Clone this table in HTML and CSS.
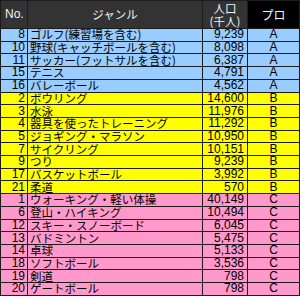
FILE: index.html
```html
<!DOCTYPE html>
<html lang="ja">
<head>
<meta charset="utf-8">
<link rel="stylesheet" href="styles.css">
</head>
<body>
<div class="tbl">
  <div class="row head">
    <div class="no">No.</div>
    <div class="genre">ジャンル</div>
    <div class="pop"><span>人口</span><span>(千人)</span></div>
    <div class="pro">プロ</div>
  </div>
  <div class="row a"><div class="no">8</div><div class="genre">ゴルフ(練習場を含む)</div><div class="pop">9,239</div><div class="pro">A</div></div>
  <div class="row a"><div class="no">10</div><div class="genre">野球(キャッチボールを含む)</div><div class="pop">8,098</div><div class="pro">A</div></div>
  <div class="row a"><div class="no">11</div><div class="genre">サッカー(フットサルを含む)</div><div class="pop">6,387</div><div class="pro">A</div></div>
  <div class="row a"><div class="no">15</div><div class="genre">テニス</div><div class="pop">4,791</div><div class="pro">A</div></div>
  <div class="row a"><div class="no">16</div><div class="genre">バレーボール</div><div class="pop">4,562</div><div class="pro">A</div></div>
  <div class="row b"><div class="no">2</div><div class="genre">ボウリング</div><div class="pop">14,600</div><div class="pro">B</div></div>
  <div class="row b"><div class="no">3</div><div class="genre">水泳</div><div class="pop">11,976</div><div class="pro">B</div></div>
  <div class="row b"><div class="no">4</div><div class="genre">器具を使ったトレーニング</div><div class="pop">11,292</div><div class="pro">B</div></div>
  <div class="row b"><div class="no">5</div><div class="genre">ジョギング・マラソン</div><div class="pop">10,950</div><div class="pro">B</div></div>
  <div class="row b"><div class="no">7</div><div class="genre">サイクリング</div><div class="pop">10,151</div><div class="pro">B</div></div>
  <div class="row b"><div class="no">9</div><div class="genre">つり</div><div class="pop">9,239</div><div class="pro">B</div></div>
  <div class="row b"><div class="no">17</div><div class="genre">バスケットボール</div><div class="pop">3,992</div><div class="pro">B</div></div>
  <div class="row b"><div class="no">21</div><div class="genre">柔道</div><div class="pop">570</div><div class="pro">B</div></div>
  <div class="row c"><div class="no">1</div><div class="genre">ウォーキング・軽い体操</div><div class="pop">40,149</div><div class="pro">C</div></div>
  <div class="row c"><div class="no">6</div><div class="genre">登山・ハイキング</div><div class="pop">10,494</div><div class="pro">C</div></div>
  <div class="row c"><div class="no">12</div><div class="genre">スキー・スノーボード</div><div class="pop">6,045</div><div class="pro">C</div></div>
  <div class="row c"><div class="no">13</div><div class="genre">バドミントン</div><div class="pop">5,475</div><div class="pro">C</div></div>
  <div class="row c"><div class="no">14</div><div class="genre">卓球</div><div class="pop">5,133</div><div class="pro">C</div></div>
  <div class="row c"><div class="no">18</div><div class="genre">ソフトボール</div><div class="pop">3,536</div><div class="pro">C</div></div>
  <div class="row c"><div class="no">19</div><div class="genre">剣道</div><div class="pop">798</div><div class="pro">C</div></div>
  <div class="row c"><div class="no">20</div><div class="genre">ゲートボール</div><div class="pop">798</div><div class="pro">C</div></div>
</div>
</body>
</html>
```
FILE: styles.css
```css
html, body {
  margin: 0;
  padding: 0;
  background: #fff;
}
.tbl {
  width: 300px;
  box-sizing: border-box;
  padding: 1px;
  background: #1c1c1c;
  display: grid;
  grid-template-columns: 26px 174px 44px 51px;
  grid-template-rows: 27px repeat(21, 11.714px);
  gap: 1px;
  font-family: "Noto Sans CJK JP", sans-serif;
  font-size: 11.5px;
  color: #000;
}
.row {
  display: contents;
}
.row > div {
  display: flex;
  align-items: center;
  line-height: 11px;
  white-space: nowrap;
}
.a > div { background: #99ccff; }
.b > div { background: #ffff00; }
.c > div { background: #ff99cc; }
.no {
  justify-content: flex-end;
  padding-right: 2px;
  font-family: "Liberation Sans", sans-serif;
  font-size: 12px;
}
.genre {
  padding-left: 2px;
}
.pop {
  justify-content: flex-end;
  padding-right: 3px;
  font-family: "Liberation Sans", sans-serif;
  font-size: 12px;
}
.pro {
  justify-content: center;
  font-family: "Liberation Sans", sans-serif;
  font-size: 12px;
}
.head > div {
  background: #333333;
  color: #f4f4f4;
}
.head .no {
  justify-content: flex-start;
  padding-left: 4px;
  padding-right: 0;
}
.head .genre {
  justify-content: center;
  padding-left: 0;
}
.head .pop {
  flex-direction: column;
  justify-content: center;
  align-items: center;
  padding-right: 0;
  font-family: "Noto Sans CJK JP", sans-serif;
  font-size: 11.5px;
  line-height: 13px;
}
.head .pro {
  background: #000;
  font-family: "Noto Sans CJK JP", sans-serif;
}
```
